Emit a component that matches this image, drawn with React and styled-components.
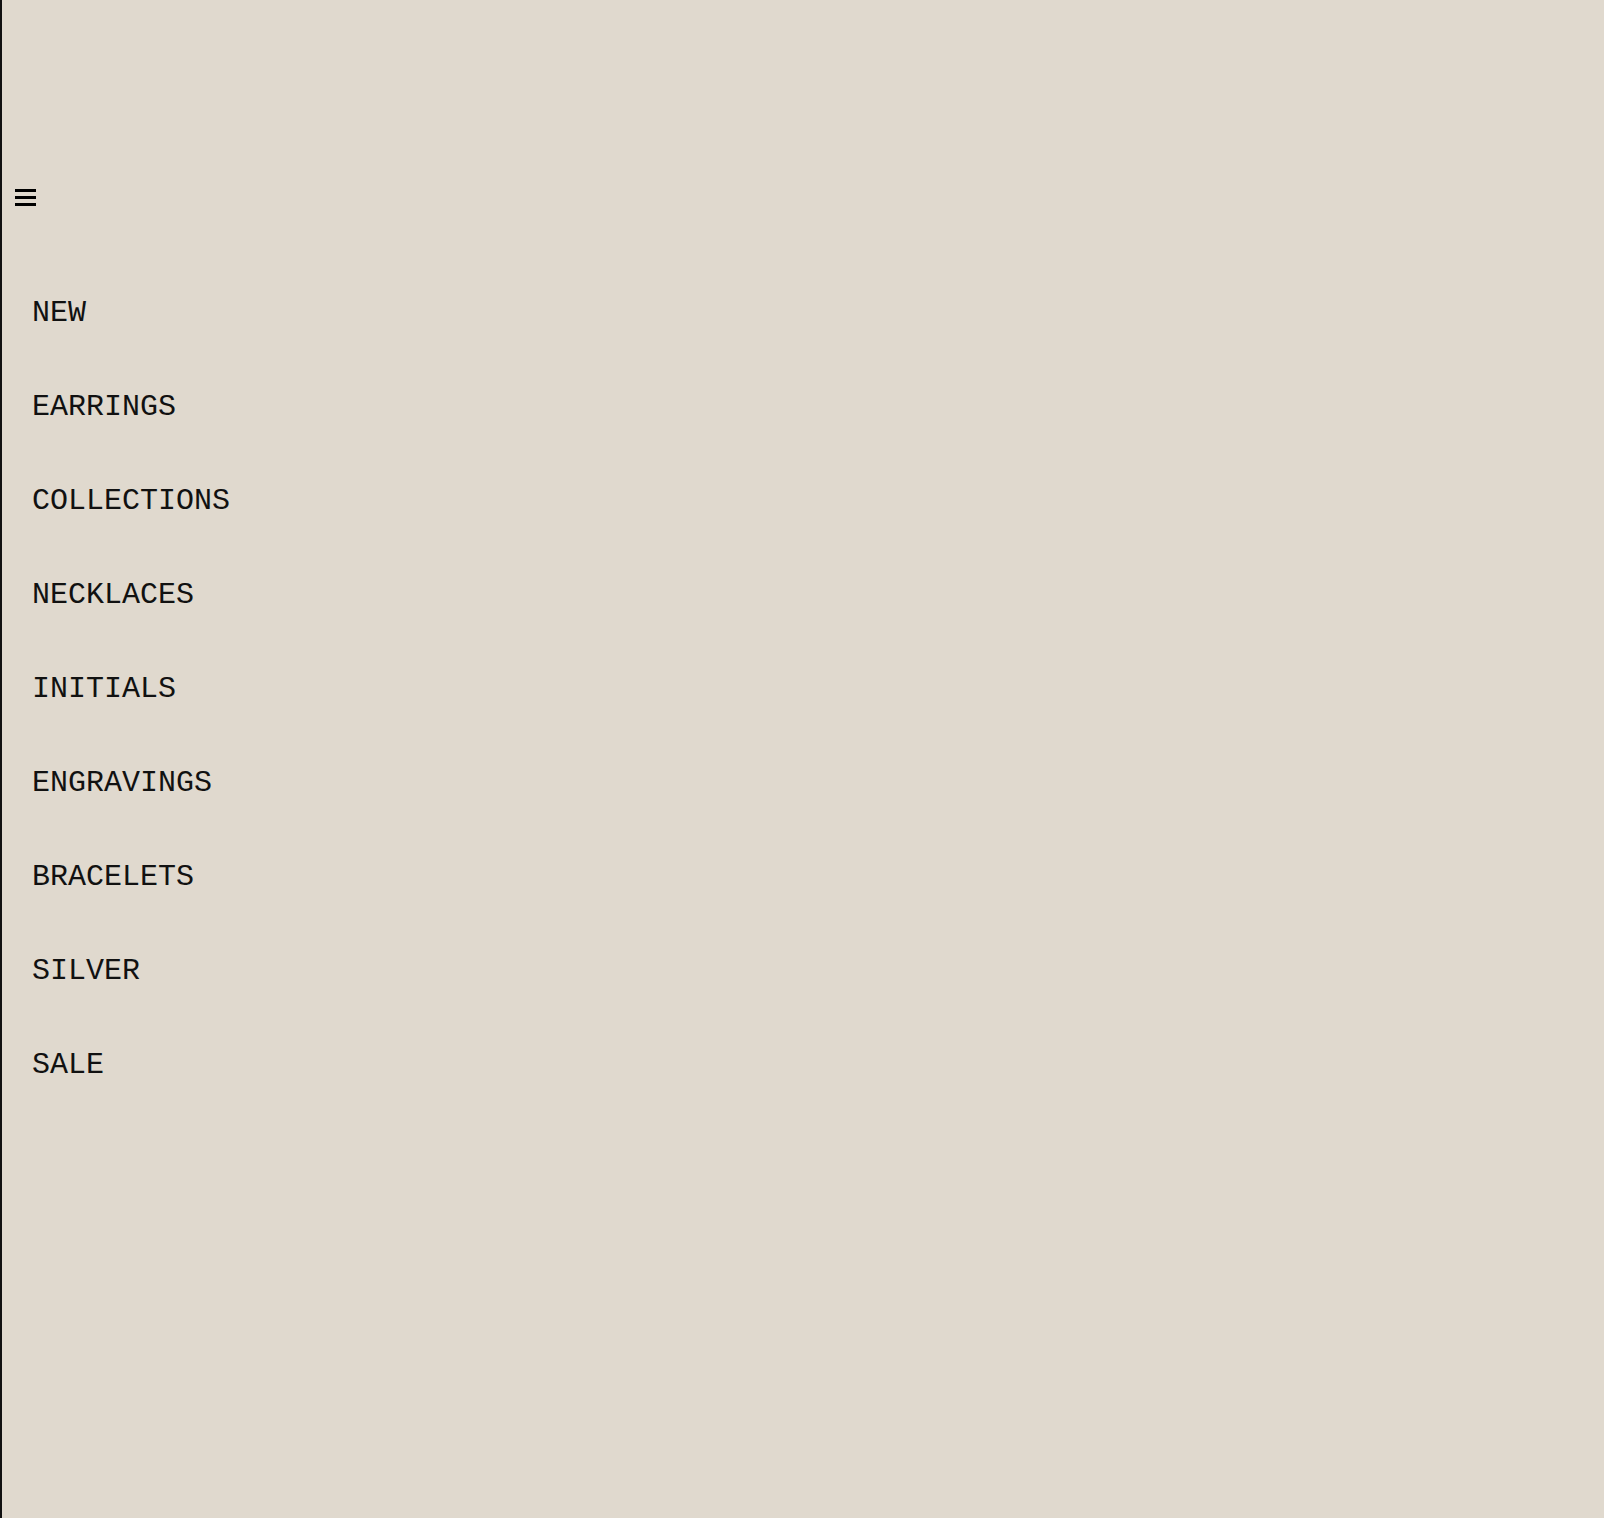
import React from 'react'
import styled, { createGlobalStyle } from 'styled-components'

const GlobalStyle = createGlobalStyle`
  html, body {
    margin: 0;
    padding: 0;
    background: #e0d9ce;
  }
`

const Page = styled.div`
  min-height: 100vh;
  box-sizing: border-box;
  border-left: 2px solid #111;
  background: #e0d9ce;
  color: #111;
  font-family: "Courier New", "Liberation Mono", monospace;
`

const Header = styled.header`
  display: flex;
  align-items: flex-start;
  padding: 189px 0 0 13px;
  height: 17px;
`

const MenuButton = styled.button`
  display: flex;
  padding: 0;
  border: none;
  background: none;
  cursor: pointer;
`

const Nav = styled.nav`
  display: flex;
  flex-direction: column;
  margin-top: 60px;
  padding-left: 30px;
`

const NavItem = styled.a`
  display: block;
  height: 94px;
  line-height: 94px;
  font-size: 30px;
  color: #111;
  text-decoration: none;
  text-transform: uppercase;
`

const items = ['New', 'Earrings', 'Collections', 'Necklaces', 'Initials', 'Engravings', 'Bracelets', 'Silver', 'Sale']

function MenuIcon() {
  return (
    <svg width="21" height="17" viewBox="0 0 21 17" shapeRendering="crispEdges">
      <rect x="0" y="0" width="21" height="3" fill="#000" />
      <rect x="0" y="7" width="21" height="3" fill="#000" />
      <rect x="0" y="14" width="21" height="3" fill="#000" />
    </svg>
  )
}

export default function App() {
  return (
    <>
      <GlobalStyle />
      <Page>
        <Header>
          <MenuButton aria-label="menu">
            <MenuIcon />
          </MenuButton>
        </Header>
        <Nav>
          {items.map(i => <NavItem key={i} href="#">{i}</NavItem>)}
        </Nav>
      </Page>
    </>
  )
}
